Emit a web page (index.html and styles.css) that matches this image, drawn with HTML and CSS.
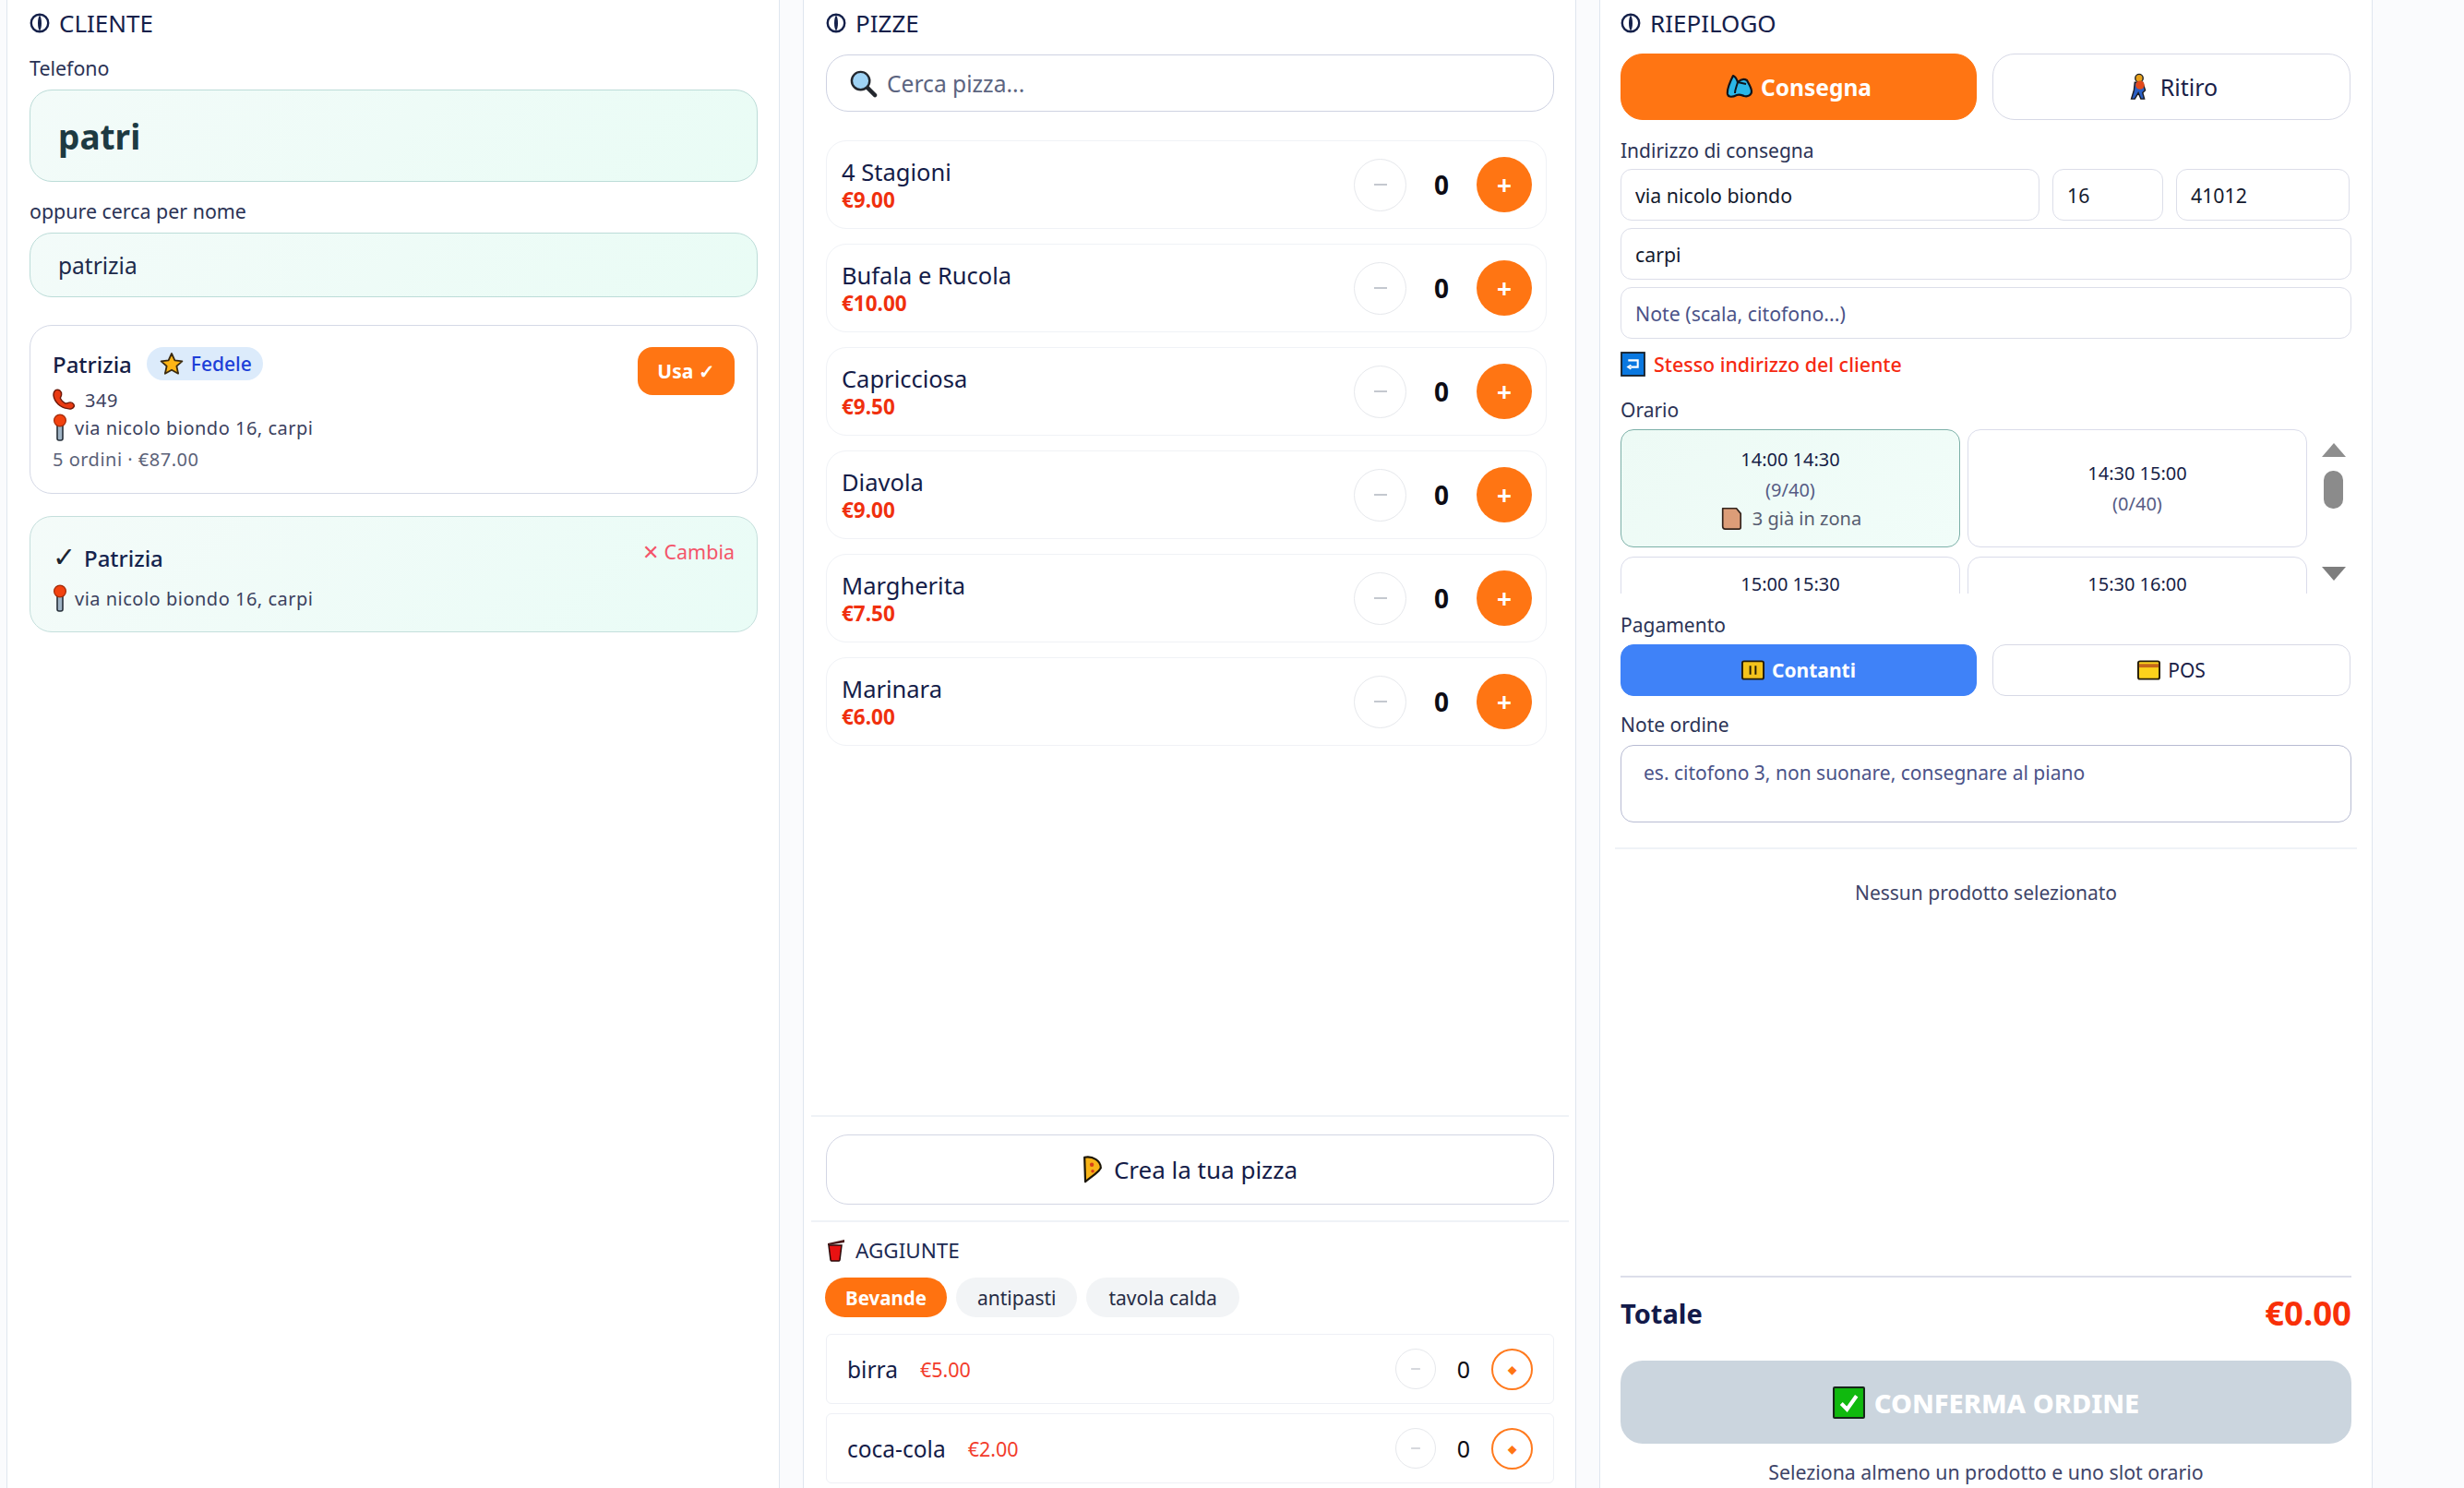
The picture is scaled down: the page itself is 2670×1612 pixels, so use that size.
FILE: index.html
```html
<!DOCTYPE html>
<html lang="it">
<head>
  <meta charset="UTF-8" />
  <meta name="viewport" content="width=device-width, initial-scale=1.0" />
  <title>Nuovo ordine</title>
  <link rel="stylesheet" href="styles.css">
</head>
<body>
  <svg class="defs" width="0" height="0">
    <symbol id="i-info" viewBox="0 0 20 20">
      <circle cx="10" cy="10" r="8.400" fill="none" stroke="#14204a" stroke-width="2.200"/>
      <path d="M10 2.500c-2.400 2-2.400 13 0 15 2.400-2 2.400-13 0-15z" fill="#14204a"/>
    </symbol>
    <symbol id="i-pin" viewBox="0 0 16 30">
      <rect x="5" y="11" width="6" height="18" rx="2" fill="#9fb3c4" stroke="#27303a" stroke-width="1.600"/>
      <circle cx="8" cy="7.500" r="6.400" fill="#f2420f" stroke="#a32a08" stroke-width="1.200"/>
    </symbol>
    <symbol id="i-minus" viewBox="0 0 20 20">
      <path d="M3 10h14" stroke="#c4c8cf" stroke-width="2"/>
    </symbol>
  </svg>

  <div class="layout">
    <section class="panel panel-client">
      <h2 class="panel-title"><svg class="ico-title"><use href="#i-info"/></svg>CLIENTE</h2>
      <label class="field-label field-label-client">Telefono</label>
      <input class="input input-phone" type="text" value="patri">
      <label class="field-label field-label-client field-label-gap">oppure cerca per nome</label>
      <input class="input input-name" type="text" value="patrizia">

      <div class="client-card">
        <div class="client-top">
          <div class="client-head">
            <span class="client-name">Patrizia</span>
            <span class="badge">
              <svg class="ico-star" viewBox="0 0 26 26"><path d="M13 2l3.400 7.400 8 .9-6 5.400 1.700 8L13 19.700 5.900 23.700l1.700-8-6-5.400 8-.9z" fill="#fdb515" stroke="#3a2a10" stroke-width="1.800" stroke-linejoin="round"/></svg>
              Fedele
            </span>
          </div>
          <button class="btn-use">Usa ✓</button>
        </div>
        <div class="client-line client-phone">
          <svg class="ico-phone" viewBox="0 0 26 24"><path d="M4 1c3-1 6 1 6 5 0 3-2 3-1 5 1 2 3 4 5 5 2 1 3-1 6-1 3 0 5 3 4 5-1 2-4 3-7 2C9 21 2 15 1 7c0-3 1-5 3-6z" fill="#e93a12" stroke="#6e1808" stroke-width="1.500" stroke-linejoin="round"/></svg>
          349
        </div>
        <div class="client-line"><svg class="ico-pin"><use href="#i-pin"/></svg>via nicolo biondo 16, carpi</div>
        <div class="client-line client-stats">5 ordini · €87.00</div>
      </div>

      <div class="client-card client-selected">
        <div class="selected-top">
          <span class="selected-name"><span class="selected-check">✓</span>Patrizia</span>
          <span class="change-link">✕ Cambia</span>
        </div>
        <div class="client-line client-line-gap"><svg class="ico-pin"><use href="#i-pin"/></svg>via nicolo biondo 16, carpi</div>
      </div>
    </section>

    <section class="panel panel-pizze">
      <h2 class="panel-title"><svg class="ico-title"><use href="#i-info"/></svg>PIZZE</h2>
      <div class="search">
        <svg class="ico-search" viewBox="0 0 32 32"><path d="M20 20l9 9" stroke="#23272e" stroke-width="4.500" stroke-linecap="round"/><circle cx="13" cy="13" r="10" fill="#9fd3f5" stroke="#23272e" stroke-width="2.500"/></svg>
        <input class="search-input" type="text" placeholder="Cerca pizza...">
      </div>

      <div class="pizza-list">
        <div class="pizza-row">
          <div><div class="pizza-name">4 Stagioni</div><div class="pizza-price">€9.00</div></div>
          <div class="stepper"><span class="step-minus"><svg class="ico-minus"><use href="#i-minus"/></svg></span><span class="step-count">0</span><span class="step-plus">+</span></div>
        </div>
        <div class="pizza-row">
          <div><div class="pizza-name">Bufala e Rucola</div><div class="pizza-price">€10.00</div></div>
          <div class="stepper"><span class="step-minus"><svg class="ico-minus"><use href="#i-minus"/></svg></span><span class="step-count">0</span><span class="step-plus">+</span></div>
        </div>
        <div class="pizza-row">
          <div><div class="pizza-name">Capricciosa</div><div class="pizza-price">€9.50</div></div>
          <div class="stepper"><span class="step-minus"><svg class="ico-minus"><use href="#i-minus"/></svg></span><span class="step-count">0</span><span class="step-plus">+</span></div>
        </div>
        <div class="pizza-row">
          <div><div class="pizza-name">Diavola</div><div class="pizza-price">€9.00</div></div>
          <div class="stepper"><span class="step-minus"><svg class="ico-minus"><use href="#i-minus"/></svg></span><span class="step-count">0</span><span class="step-plus">+</span></div>
        </div>
        <div class="pizza-row">
          <div><div class="pizza-name">Margherita</div><div class="pizza-price">€7.50</div></div>
          <div class="stepper"><span class="step-minus"><svg class="ico-minus"><use href="#i-minus"/></svg></span><span class="step-count">0</span><span class="step-plus">+</span></div>
        </div>
        <div class="pizza-row">
          <div><div class="pizza-name">Marinara</div><div class="pizza-price">€6.00</div></div>
          <div class="stepper"><span class="step-minus"><svg class="ico-minus"><use href="#i-minus"/></svg></span><span class="step-count">0</span><span class="step-plus">+</span></div>
        </div>
      </div>

      <div class="sep"></div>
      <button class="btn-create">
        <svg class="ico-pizza" viewBox="0 0 24 34"><path d="M2 2c10-2 20 4 20 13-3 6-12 11-19 17z" fill="#f7b418" stroke="#1c1608" stroke-width="2.500" stroke-linejoin="round"/><circle cx="11" cy="11" r="2.500" fill="#d8401a"/><circle cx="12" cy="19" r="2" fill="#d8401a"/></svg>
        Crea la tua pizza
      </button>
      <div class="sep sep-extras"></div>
      <h3 class="extras-title">
        <svg class="ico-cup" viewBox="0 0 22 26"><path d="M2 6l18-4v3L2 8z" fill="#4a1a1a"/><path d="M3 8h14l-2 16a1.500 1.500 0 0 1-1.500 1h-7A1.500 1.500 0 0 1 5 24z" fill="#e81212" stroke="#2a0a0a" stroke-width="1.500"/></svg>
        AGGIUNTE
      </h3>
      <div class="tabs">
        <span class="tab tab-active">Bevande</span>
        <span class="tab">antipasti</span>
        <span class="tab tab-wide">tavola calda</span>
      </div>
      <div class="extra-row">
        <span class="extra-name">birra</span><span class="extra-price">€5.00</span>
        <div class="stepper stepper-small"><span class="step-minus"><svg class="ico-minus"><use href="#i-minus"/></svg></span><span class="step-count">0</span><span class="step-plus">◆</span></div>
      </div>
      <div class="extra-row">
        <span class="extra-name">coca-cola</span><span class="extra-price">€2.00</span>
        <div class="stepper stepper-small"><span class="step-minus"><svg class="ico-minus"><use href="#i-minus"/></svg></span><span class="step-count">0</span><span class="step-plus">◆</span></div>
      </div>
    </section>

    <section class="panel panel-summary">
      <h2 class="panel-title"><svg class="ico-title"><use href="#i-info"/></svg>RIEPILOGO</h2>
      <div class="toggle">
        <button class="toggle-btn toggle-orange">
          <svg class="ico-btn" viewBox="0 0 30 28"><path d="M8 2c3 1 4 4 5 7 3-3 7-4 10-2 2 4 5 8 5 12 0 4-4 6-8 5-3-1-5-2-8-1-4 2-9 3-10-1C1 17 5 8 8 2z" fill="#2bb7e8" stroke="#10131a" stroke-width="2.200" stroke-linejoin="round"/><path d="M13 9c-1 4-3 8-3 12M13 9l9 2" fill="none" stroke="#10131a" stroke-width="2"/></svg>
          Consegna
        </button>
        <button class="toggle-btn">
          <svg class="ico-btn" viewBox="0 0 26 32"><circle cx="13" cy="6" r="4.500" fill="#e8a21c" stroke="#222" stroke-width="1.500"/><path d="M8 11h9l3 9-3 3 2 7h-4l-3-7-4 7H4l3-10z" fill="#2a5fc4" stroke="#1c1c20" stroke-width="1.500"/><circle cx="14" cy="14" r="5" fill="#e2491c"/></svg>
          Ritiro
        </button>
      </div>

      <label class="field-label field-label-address">Indirizzo di consegna</label>
      <div class="addr-row">
        <input class="input-small addr-street" type="text" value="via nicolo biondo">
        <input class="input-small addr-number" type="text" value="16">
        <input class="input-small addr-zip" type="text" value="41012">
      </div>
      <input class="input-small addr-full" type="text" value="carpi">
      <input class="input-small addr-full" type="text" placeholder="Note (scala, citofono...)">
      <div class="same-address">
        <svg class="ico-same" viewBox="0 0 26 26"><rect x="1" y="1" width="24" height="24" fill="#0a78e0" stroke="#17222e" stroke-width="1.800"/><path d="M8 9h10v7H11M11 14l-3 2 3 2" fill="none" stroke="#fff" stroke-width="2"/></svg>
        Stesso indirizzo del cliente
      </div>

      <label class="field-label field-label-slot">Orario</label>
      <div class="slots-box">
        <div class="slots">
          <div class="slot slot-active">
            <div class="slot-time">14:00 14:30</div>
            <div class="slot-count">(9/40)</div>
            <div class="slot-zone">
              <svg class="ico-box" viewBox="0 0 26 28"><path d="M3 3h16l5 6v16a2 2 0 0 1-2 2H6a3 3 0 0 1-3-3z" fill="#dc9d78" stroke="#33241c" stroke-width="1.800" stroke-linejoin="round"/></svg>
              3 già in zona
            </div>
          </div>
          <div class="slot">
            <div class="slot-time">14:30 15:00</div>
            <div class="slot-count">(0/40)</div>
          </div>
          <div class="slot"><div class="slot-time">15:00 15:30</div></div>
          <div class="slot"><div class="slot-time">15:30 16:00</div></div>
        </div>
        <div class="scrollbar">
          <span class="arrow-up"></span>
          <span class="thumb"></span>
          <span class="arrow-down"></span>
        </div>
      </div>

      <label class="field-label field-label-pay">Pagamento</label>
      <div class="toggle">
        <button class="pay-btn pay-active">
          <svg class="ico-pay" viewBox="0 0 26 24"><rect x="1" y="2" width="24" height="20" rx="2" fill="#f3c31c" stroke="#241c08" stroke-width="2"/><path d="M10 7v10M16 7v10" stroke="#241c08" stroke-width="2"/></svg>
          Contanti
        </button>
        <button class="pay-btn">
          <svg class="ico-pay" viewBox="0 0 26 24"><rect x="1" y="2" width="24" height="20" rx="2" fill="#fcd21c" stroke="#241c08" stroke-width="2"/><rect x="2" y="5" width="22" height="4" fill="#c4661a"/></svg>
          POS
        </button>
      </div>

      <label class="field-label field-label-note">Note ordine</label>
      <textarea class="order-note" placeholder="es. citofono 3, non suonare, consegnare al piano"></textarea>
      <div class="sep sep-summary"></div>

      <div class="summary-body">Nessun prodotto selezionato</div>

      <div class="total-row">
        <span class="total-label">Totale</span>
        <span class="total-value">€0.00</span>
      </div>
      <button class="btn-confirm">
        <svg class="ico-confirm" viewBox="0 0 34 34"><rect x="1" y="1" width="32" height="32" rx="1" fill="#10b90e" stroke="#16261a" stroke-width="2"/><path d="M9 18l6 6 10-14" fill="none" stroke="#fff" stroke-width="4"/></svg>
        CONFERMA ORDINE
      </button>
      <div class="confirm-hint">Seleziona almeno un prodotto e uno slot orario</div>
    </section>
  </div>
</body>
</html>
```

FILE: styles.css
```css
* {
  box-sizing: border-box;
}
html, body {
  margin: 0;
  height: 100%;
}
body {
  background: #fafbfd;
  color: #161d45;
  font-family: "Noto Sans", sans-serif;
  overflow: hidden;
}
button, input, textarea {
  font-family: inherit;
}
.defs {
  position: absolute;
}
.layout {
  display: grid;
  grid-template-columns: repeat(3, 838px);
  gap: 25px;
  height: 1612px;
  padding-left: 7px;
}
.panel {
  display: flex;
  flex-direction: column;
  min-width: 0;
  height: 1612px;
  padding: 0 23px 0 24px;
  background: #fff;
  border-left: 1px solid #dfe6ef;
  border-right: 1px solid #dfe6ef;
}
.panel-pizze {
  padding-bottom: 5px;
}
.panel-summary {
  padding: 0 22px;
}
.panel-title {
  display: flex;
  align-items: center;
  gap: 10px;
  height: 50px;
  margin: 0 0 9px;
  font-size: 26px;
  font-weight: 400;
  color: #14204a;
}
.ico-title {
  width: 22px;
  height: 22px;
}
.field-label {
  display: block;
  flex: none;
  height: 30px;
  margin-bottom: 6px;
  font-size: 21px;
  line-height: 30px;
  color: #2b3355;
}
.field-label-client {
  margin-bottom: 8px;
  font-size: 21.400px;
}
.field-label-gap {
  margin-top: 17px;
}
.input {
  display: block;
  flex: none;
  width: 100%;
  background: linear-gradient(135deg, #f3fbf9, #e9fcf5);
  border: 1.500px solid #bcdcd8;
  border-radius: 24px;
  outline: none;
  padding: 0 30px;
}
.input-phone {
  height: 100px;
  font-size: 37px;
  font-weight: 700;
  color: #1d3a42;
}
.input-name {
  height: 70px;
  font-size: 24.500px;
  color: #1d2a4a;
}

/* client cards */
.client-card {
  flex: none;
  margin-top: 30px;
  height: 183px;
  padding: 23px 24px;
  background: #fff;
  border: 1.500px solid #d5d9e6;
  border-radius: 24px;
}
.client-top {
  display: flex;
  justify-content: space-between;
  align-items: flex-start;
  height: 36px;
}
.client-head {
  display: flex;
  align-items: center;
  gap: 16px;
  height: 36px;
}
.client-name {
  font-size: 24px;
  font-weight: 500;
}
.badge {
  display: flex;
  align-items: center;
  gap: 8px;
  height: 36px;
  padding: 0 12px 0 14px;
  border-radius: 18px;
  background: #dcebfb;
  color: #1d3fd8;
  font-size: 21px;
  font-weight: 500;
}
.ico-star {
  width: 26px;
  height: 26px;
}
.btn-use {
  width: 105px;
  height: 52px;
  border: 0;
  border-radius: 16px;
  background: #ff7513;
  color: #fff;
  font-size: 21px;
  font-weight: 700;
}
.client-line {
  display: flex;
  align-items: center;
  height: 30px;
  font-size: 20px;
  color: #3b415e;
  letter-spacing: 0.500px;
}
.client-phone {
  margin-top: 6px;
  gap: 10px;
}
.ico-phone {
  width: 25px;
  height: 24px;
}
.ico-pin {
  width: 16px;
  height: 30px;
  margin-right: 8px;
}
.client-stats {
  margin-top: 4px;
  color: #5b6278;
}
.client-selected {
  margin-top: 24px;
  height: 126px;
  background: linear-gradient(135deg, #f4fbf9, #e9fcf6);
  border-color: #c4dfdc;
}
.selected-top {
  display: flex;
  justify-content: space-between;
  align-items: flex-start;
  height: 44px;
}
.selected-name {
  font-size: 24px;
  line-height: 44px;
  color: #15244e;
  font-weight: 500;
}
.selected-check {
  display: inline-block;
  width: 34px;
  font-size: 30px;
  font-weight: 400;
  line-height: 30px;
  color: #1c2430;
}
.change-link {
  font-size: 21.500px;
  line-height: 30px;
  color: #f4556a;
}
.client-line-gap {
  margin-top: 6px;
}

/* pizze */
.search {
  display: flex;
  align-items: center;
  flex: none;
  gap: 8px;
  height: 62px;
  padding: 0 24px;
  border: 1.500px solid #ced2e2;
  border-radius: 24px;
}
.ico-search {
  width: 31px;
  height: 31px;
}
.search-input {
  flex: 1;
  border: 0;
  outline: none;
  font-size: 24.600px;
  background: none;
}
.search-input::placeholder {
  color: #5c6480;
  opacity: 1;
}
.pizza-list {
  flex: 1;
  display: flex;
  flex-direction: column;
  gap: 16px;
  margin-top: 31px;
  margin-right: 8px;
}
.pizza-row {
  display: flex;
  justify-content: space-between;
  align-items: center;
  height: 96px;
  padding: 0 16px;
  border: 1.500px solid #f0f2f6;
  border-radius: 22px;
}
.pizza-name {
  font-size: 25.500px;
  line-height: 34px;
  color: #141c48;
}
.pizza-price {
  font-size: 22.500px;
  line-height: 28px;
  font-weight: 700;
  color: #f0300e;
}
.stepper {
  display: flex;
  align-items: center;
}
.step-minus {
  display: flex;
  align-items: center;
  justify-content: center;
  width: 57px;
  height: 57px;
  border: 1.500px solid #e6e8ec;
  border-radius: 50%;
}
.ico-minus {
  width: 20px;
  height: 20px;
}
.step-count {
  width: 76px;
  text-align: center;
  font-size: 28px;
  font-weight: 700;
  color: #0c0c14;
}
.step-plus {
  display: flex;
  align-items: center;
  justify-content: center;
  width: 60px;
  height: 60px;
  margin-right: -1px;
  border-radius: 50%;
  background: #ff7513;
  color: #fff;
  font-size: 28px;
  font-weight: 700;
}
.sep {
  height: 2px;
  margin: 0 -16px;
  background: #eff2f7;
  flex: none;
}
.btn-create {
  display: flex;
  align-items: center;
  justify-content: center;
  gap: 12px;
  height: 76px;
  margin-top: 19px;
  flex: none;
  background: #fff;
  border: 1.500px solid #d3d6e4;
  border-radius: 24px;
  color: #141c48;
  font-size: 26px;
}
.ico-pizza {
  width: 22px;
  height: 30px;
}
.sep-extras {
  margin-top: 17px;
}
.extras-title {
  display: flex;
  align-items: center;
  flex: none;
  gap: 10px;
  height: 40px;
  margin: 10px 0 0;
  font-size: 22.500px;
  font-weight: 400;
  color: #1d2a52;
}
.ico-cup {
  width: 22px;
  height: 26px;
}
.tabs {
  display: flex;
  flex: none;
  gap: 10px;
  margin: 10px 0 8px -1px;
}
.tab {
  display: flex;
  align-items: center;
  height: 43px;
  padding: 0 23px;
  border-radius: 22px;
  background: #f2f4f6;
  color: #262c45;
  font-size: 21px;
}
.tab-wide {
  padding: 0 24px;
}
.tab-active {
  padding: 0 22px;
  background: #ff7210;
  color: #fff;
  font-size: 20.500px;
  font-weight: 700;
}
.extra-row {
  display: flex;
  align-items: center;
  flex: none;
  height: 76px;
  margin-top: 10px;
  padding: 0 22px;
  border: 1.500px solid #eef0f5;
  border-radius: 6px;
}
.extra-name {
  font-size: 24.500px;
  color: #141c48;
}
.extra-price {
  margin-left: 24px;
  font-size: 21.500px;
  color: #f23c2c;
}
.stepper-small {
  margin-left: auto;
}
.stepper-small .step-minus {
  width: 44px;
  height: 44px;
}
.stepper-small .ico-minus {
  width: 14px;
  height: 14px;
}
.stepper-small .step-count {
  width: 60px;
  font-size: 25px;
  font-weight: 400;
}
.stepper-small .step-plus {
  width: 45px;
  height: 45px;
  margin-right: 0;
  background: #fff;
  border: 2px solid #ff7a1e;
  color: #ff7513;
  font-size: 12px;
}

/* riepilogo */
.panel-summary .panel-title {
  margin-bottom: 8px;
}
.toggle {
  display: grid;
  grid-template-columns: 386px 388px;
  gap: 17px;
  flex: none;
}
.toggle-btn, .pay-btn {
  display: flex;
  align-items: center;
  justify-content: center;
  gap: 8px;
  border: 1.500px solid #d7d9e6;
  border-radius: 24px;
  background: #fff;
  color: #1a2148;
}
.toggle-btn {
  height: 72px;
  font-size: 25px;
}
.toggle-orange {
  background: #ff7513;
  border-color: #ff7513;
  color: #fff;
  font-size: 24.500px;
  font-weight: 700;
}
.ico-btn {
  width: 30px;
  height: 30px;
}
.field-label-address {
  margin-top: 18px;
  margin-bottom: 5px;
}
.addr-row {
  display: grid;
  flex: none;
  grid-template-columns: 454px 120px 188px;
  gap: 14px;
}
.input-small {
  height: 56px;
  padding: 0 15px;
  border: 1.500px solid #dcdee9;
  border-radius: 12px;
  outline: none;
  font-size: 21.300px;
  color: #141a2e;
  min-width: 0;
}
.input-small::placeholder {
  color: #4b5388;
  opacity: 1;
}
.addr-full {
  display: block;
  flex: none;
  width: 100%;
  margin-top: 8px;
}
.same-address {
  display: flex;
  align-items: center;
  flex: none;
  gap: 9px;
  height: 30px;
  margin-top: 12px;
  color: #f62a12;
  font-size: 21.400px;
  font-weight: 500;
}
.ico-same {
  width: 27px;
  height: 27px;
}
.field-label-slot {
  margin-top: 20px;
}
.slots-box {
  display: flex;
  height: 178px;
  flex: none;
  overflow: hidden;
}
.slots {
  display: grid;
  grid-template-columns: 368px 368px;
  grid-auto-rows: 128px;
  column-gap: 8px;
  row-gap: 10px;
}
.slot {
  display: flex;
  flex-direction: column;
  align-items: center;
  justify-content: center;
  border: 1.500px solid #dadcea;
  border-radius: 14px;
  font-size: 20px;
  text-align: center;
}
.slot-active {
  background: linear-gradient(135deg, #edfaf5, #f1fdf9);
  border-color: #7cb0a8;
}
.slot-count {
  margin-top: 6px;
  color: #565c85;
}
.slot-zone {
  display: flex;
  align-items: center;
  gap: 10px;
  margin-top: 4px;
  color: #565c70;
}
.slot:nth-child(n+3) {
  justify-content: flex-start;
  padding-top: 15px;
}
.ico-box {
  width: 26px;
  height: 26px;
}
.scrollbar {
  display: flex;
  flex-direction: column;
  align-items: center;
  width: 27px;
  margin-left: 15px;
  padding-top: 15px;
}
.arrow-up, .arrow-down {
  width: 0;
  height: 0;
  border-left: 13px solid transparent;
  border-right: 13px solid transparent;
}
.arrow-up {
  border-bottom: 15px solid #8e8e8e;
}
.arrow-down {
  margin-top: 63px;
  border-top: 15px solid #7e7e7e;
}
.thumb {
  width: 21px;
  height: 41px;
  margin-top: 15px;
  border-radius: 10px;
  background: #8b8b8b;
}
.field-label-pay {
  margin-top: 19px;
}
.pay-btn {
  height: 56px;
  font-size: 21px;
  border-radius: 14px;
}
.pay-active {
  background: #3f82f8;
  border-color: #3f82f8;
  color: #fff;
  font-weight: 700;
}
.ico-pay {
  width: 25px;
  height: 24px;
}
.field-label-note {
  margin-top: 16px;
  margin-bottom: 7px;
}
.order-note {
  display: block;
  flex: none;
  width: 100%;
  height: 84px;
  padding: 15px 24px;
  border: 1.500px solid #b7bbd2;
  border-radius: 14px;
  font-size: 21px;
  resize: none;
  outline: none;
}
.order-note::placeholder {
  color: #4b5388;
  opacity: 1;
}
.sep-summary {
  margin: 27px -6px 0;
}
.summary-body {
  flex: 1;
  padding-top: 32px;
  border-bottom: 2px solid #dcdeea;
  font-size: 21px;
  line-height: 30px;
  text-align: center;
  color: #3e4468;
}
.total-row {
  display: flex;
  justify-content: space-between;
  align-items: center;
  flex: none;
  height: 76px;
}
.total-label {
  font-size: 29px;
  font-weight: 700;
  color: #131a4a;
}
.total-value {
  font-size: 36.500px;
  font-weight: 700;
  color: #f83008;
}
.btn-confirm {
  display: flex;
  align-items: center;
  justify-content: center;
  gap: 10px;
  flex: none;
  height: 90px;
  margin-top: 14px;
  border: 0;
  border-radius: 24px;
  background: #cbd5de;
  color: #fff;
  font-size: 29px;
  font-weight: 800;
}
.ico-confirm {
  width: 35px;
  height: 35px;
}
.confirm-hint {
  flex: none;
  height: 32px;
  margin-top: 16px;
  font-size: 21.300px;
  line-height: 30px;
  text-align: center;
  color: #3e4468;
}
```
